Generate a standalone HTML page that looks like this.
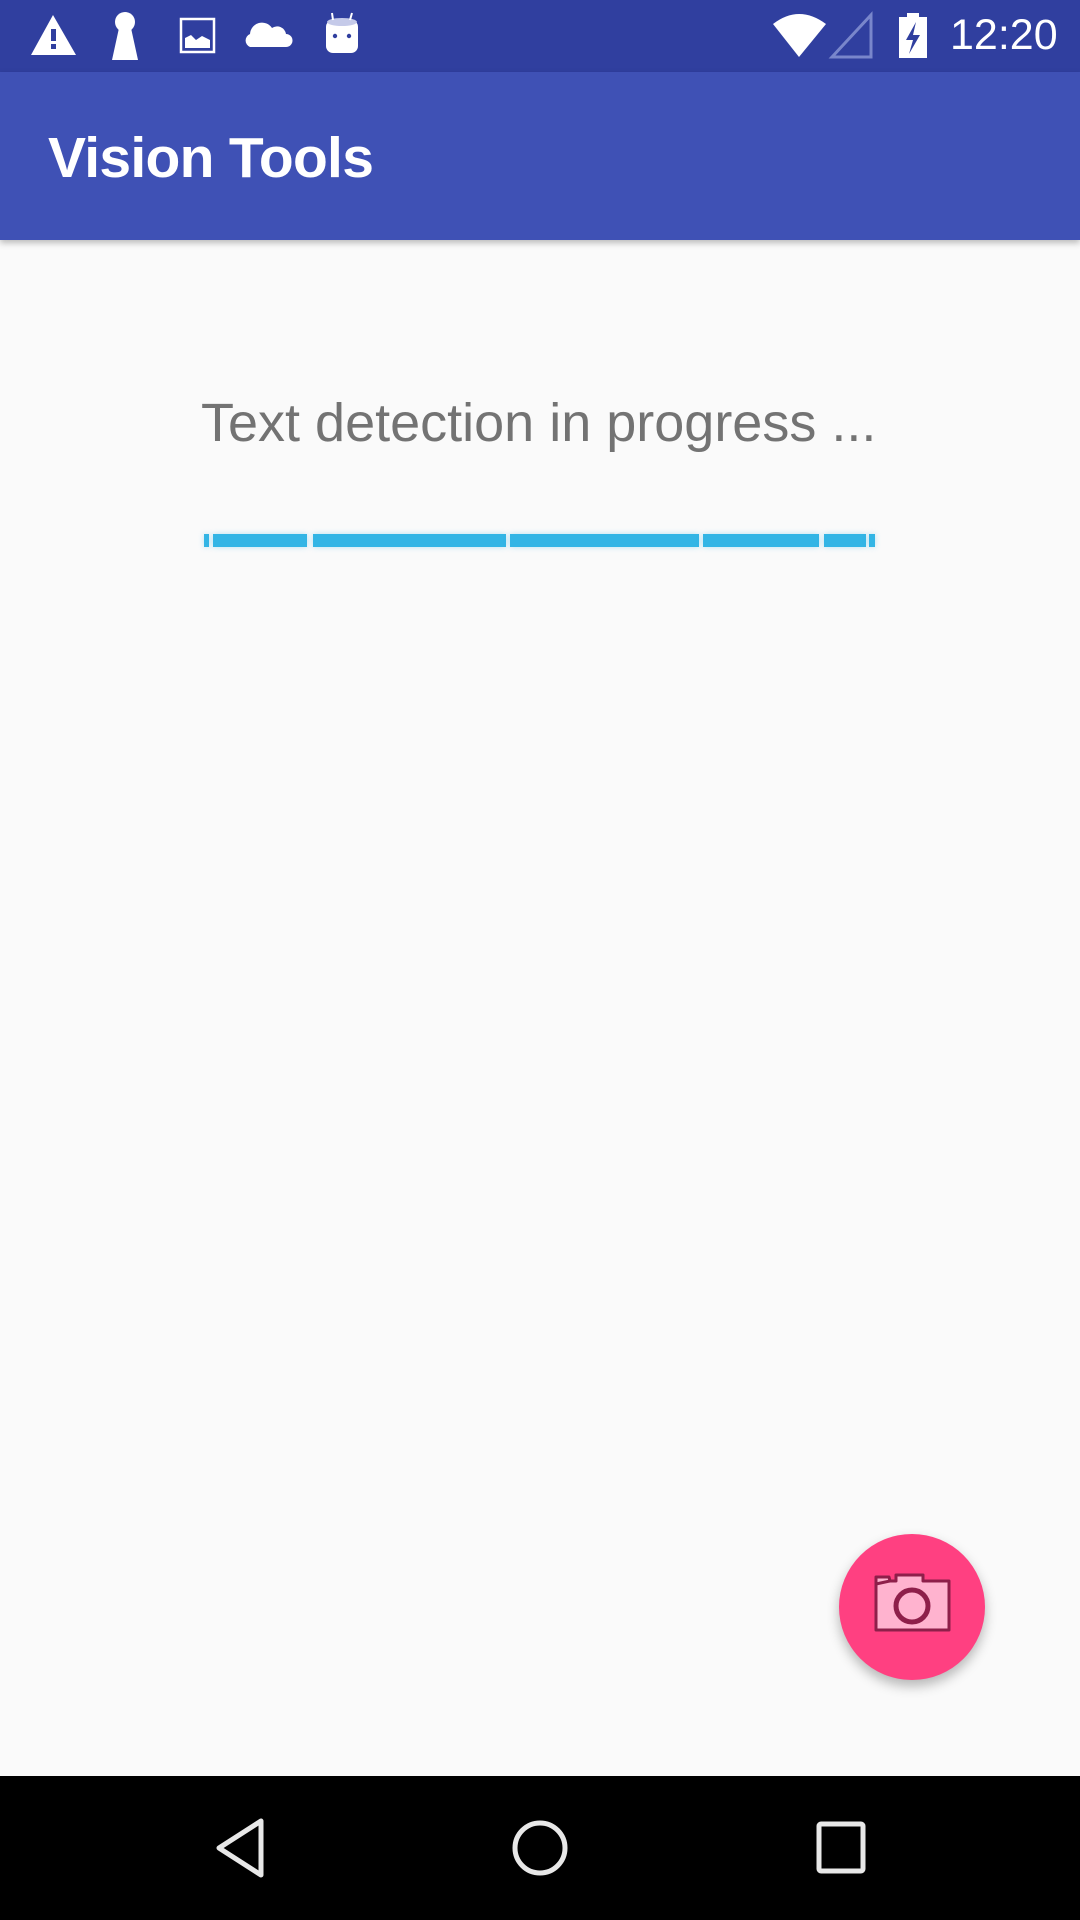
<!DOCTYPE html>
<html><head><meta charset="utf-8"><style>
*{margin:0;padding:0;box-sizing:border-box}
body{width:1080px;height:1920px;background:#FAFAFA;position:relative;overflow:hidden;font-family:"Liberation Sans",sans-serif}
.sb{position:absolute;left:0;top:0;width:1080px;height:72px;background:#303F9F}
.ab{position:absolute;left:0;top:72px;width:1080px;height:168px;background:#3F51B5;box-shadow:0 3px 6px rgba(0,0,0,.25)}
.title{position:absolute;left:48px;top:130px;color:#fff;font-size:57px;line-height:1;font-weight:bold;letter-spacing:-0.7px}
.msg{position:absolute;left:201px;top:396px;color:#737373;font-size:54px;line-height:1;white-space:nowrap}
.seg{position:absolute;top:534px;height:13px;background:#33B5E5;box-shadow:0 0 6px rgba(51,181,229,.35)}
.fab{position:absolute;left:839px;top:1534px;width:146px;height:146px;border-radius:50%;background:#FF4081;box-shadow:0 6px 12px rgba(0,0,0,.28)}
.nav{position:absolute;left:0;top:1776px;width:1080px;height:144px;background:#000}
.time{position:absolute;left:950px;top:14px;color:#fff;font-size:43px;line-height:1}
</style></head><body>
<div class="sb">
<svg width="1080" height="72" style="position:absolute;left:0;top:0">
<path d="M53 15 L76 55 L31 55 Z" fill="#fff"/>
<rect x="51" y="29" width="5" height="12" fill="#303F9F"/><rect x="51" y="44" width="5" height="5" fill="#303F9F"/>
<circle cx="125" cy="22" r="10" fill="#fff"/><path d="M119 28 L131 28 L138 60 L112 60 Z" fill="#fff"/>
<rect x="181" y="19" width="33" height="33" fill="none" stroke="#fff" stroke-width="2.5"/>
<path d="M185 48 L185 38 L191 35 L196 40 L202 36 L210 40 L210 48 Z" fill="#fff"/>
<path d="M250 47 a7 7 0 0 1 0-13 a12 12 0 0 1 22-6 a9 9 0 0 1 14 6 a6.5 6.5 0 0 1 0 13 Z" fill="#fff"/>
<rect x="326" y="20" width="32" height="33" rx="7" fill="#fff"/>
<ellipse cx="342" cy="22" rx="15" ry="4" fill="#C5CAE9"/>
<line x1="332" y1="13" x2="333" y2="20" stroke="#fff" stroke-width="2"/><line x1="352" y1="13" x2="350" y2="20" stroke="#fff" stroke-width="2"/>
<circle cx="335" cy="36" r="2.2" fill="#303F9F"/><circle cx="349" cy="36" r="2.2" fill="#303F9F"/>
<path d="M773 24 Q799 4 826 24 L799 57 Z" fill="#fff"/>
<path d="M832 57 L871 15 L871 57 Z" fill="none" stroke="#7986CB" stroke-width="3"/>
<rect x="899" y="17" width="28" height="41" fill="#fff"/><rect x="907" y="13" width="12" height="5" fill="#fff"/>
<path d="M916 22 L906 40 L913 40 L909 54 L920 35 L913 35 Z" fill="#303F9F"/>
</svg>
<div class="time">12:20</div>
</div>
<div class="ab"></div>
<div class="title">Vision Tools</div>
<div class="msg">Text detection in progress ...</div>
<div class="seg" style="left:204px;width:5px"></div>
<div class="seg" style="left:213px;width:94px"></div>
<div class="seg" style="left:313px;width:193px"></div>
<div class="seg" style="left:510px;width:189px"></div>
<div class="seg" style="left:703px;width:116px"></div>
<div class="seg" style="left:824px;width:42px"></div>
<div class="seg" style="left:869px;width:6px"></div>
<div class="fab">
<svg width="146" height="146" style="position:absolute;left:0;top:0">
<path d="M37 50 L37 96 L110 96 L110 47 L84 47 L84 41 L57 41 L57 47 L51 47 Z M37 50 L37 43 L50 43 L51 47" fill="#FFB3CF" stroke="#8E1F4A" stroke-width="3" stroke-linejoin="round"/>
<circle cx="73" cy="72" r="16" fill="#FFB3CF" stroke="#8E1F4A" stroke-width="5"/>
</svg>
</div>
<div class="nav">
<svg width="1080" height="144" style="position:absolute;left:0;top:0">
<path d="M261 45 L261 99 L219 72 Z" fill="none" stroke="#E8E8E8" stroke-width="5" stroke-linejoin="round"/>
<circle cx="540" cy="72" r="25" fill="none" stroke="#E8E8E8" stroke-width="5"/>
<rect x="819" y="48" width="44" height="47" rx="2" fill="none" stroke="#E8E8E8" stroke-width="5"/>
</svg>
</div>
</body></html>
